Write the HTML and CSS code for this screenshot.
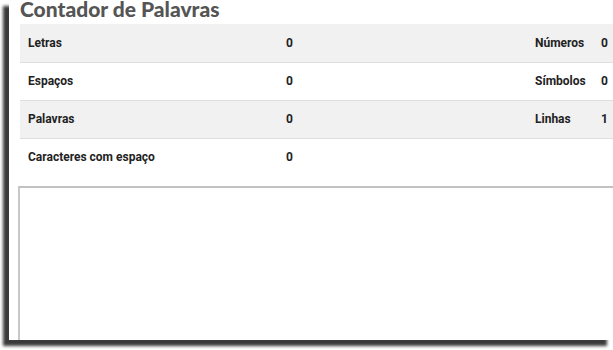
FILE: index.html
```html
<!DOCTYPE html>
<html lang="pt">
<head>
<meta charset="utf-8">
<title>Contador de Palavras</title>
<link rel="stylesheet" href="styles.css">
</head>
<body>
<div class="frame">
  <h1 class="title">Contador de Palavras</h1>
  <table class="stats">
    <colgroup>
      <col class="c1"><col class="c2"><col class="c3"><col class="c4">
    </colgroup>
    <tbody>
      <tr class="odd"><th>Letras</th><td>0</td><th>Números</th><td>0</td></tr>
      <tr><th>Espaços</th><td>0</td><th>Símbolos</th><td>0</td></tr>
      <tr class="odd"><th>Palavras</th><td>0</td><th>Linhas</th><td>1</td></tr>
      <tr class="last"><th>Caracteres com espaço</th><td>0</td><th></th><td></td></tr>
    </tbody>
  </table>
  <textarea class="input"></textarea>
</div>
</body>
</html>
```

FILE: styles.css
```css
html, body {
  margin: 0;
  padding: 0;
  background: #ffffff;
}
body {
  width: 613px;
  height: 350px;
  overflow: hidden;
}
.frame {
  margin-left: 9px;
  width: 604px;
  height: 340px;
  background: #ffffff;
  box-shadow: -6px 6px 3px #3a3a3a;
  overflow: hidden;
  display: flex;
  flex-direction: column;
}
.title {
  flex: none;
  margin: 0 0 0 11px;
  height: 24px;
  font-family: Lato, "Open Sans", sans-serif;
  font-weight: 900;
  font-size: 21px;
  line-height: 18px;
  color: #555555;
  white-space: nowrap;
}
.stats {
  margin-left: 11px;
  border-collapse: collapse;
  table-layout: fixed;
  width: 653px;
  flex: none;
  font-family: Roboto, "Liberation Sans", sans-serif;
  font-size: 12px;
  color: #222222;
}
.c1 { width: 258px; }
.c2 { width: 249px; }
.c3 { width: 66px; }
.c4 { width: 80px; }
.stats tr {
  height: 38px;
  border-bottom: 1px solid #dedede;
}
.stats tr.last { border-bottom: none; }
.stats tr.odd { background: #f1f1f1; }
.stats th, .stats td {
  padding: 0 0 0 8px;
  text-align: left;
  font-weight: 700;
  white-space: nowrap;
  vertical-align: middle;
}
.input {
  display: block;
  flex: none;
  margin: 10px 0 0 9px;
  width: 640px;
  height: 200px;
  border: 1px solid #bdbdbd;
  border-top: 2px solid #c2c2c2;
  border-left: 2px solid #c8c8c8;
  background: #ffffff;
  resize: none;
  padding: 0;
}
```
